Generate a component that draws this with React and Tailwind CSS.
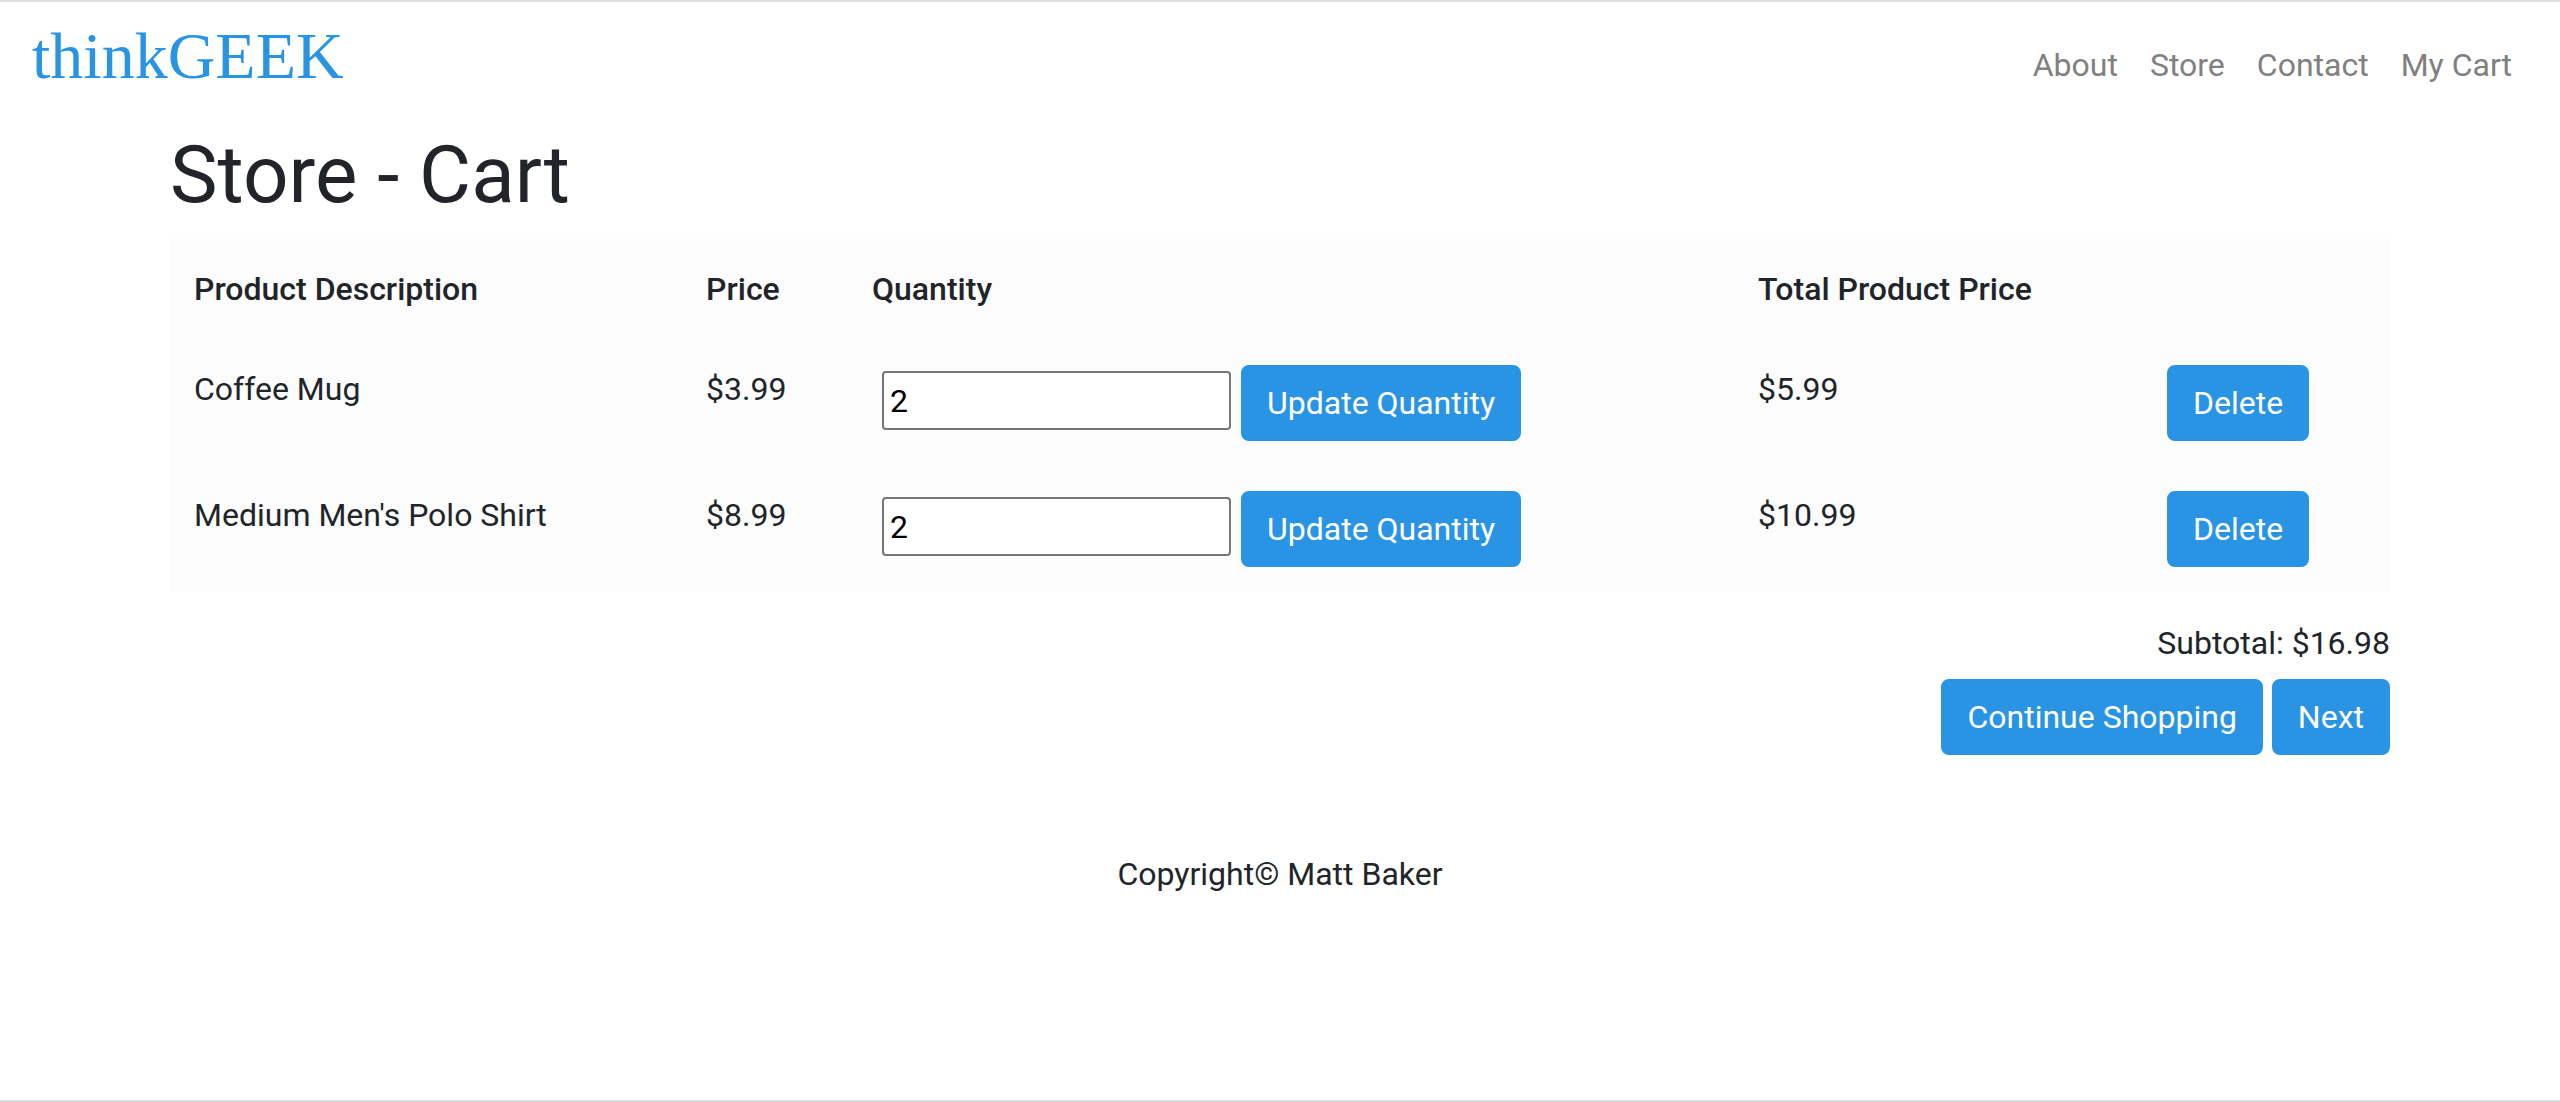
import React from 'react';

const items = [
  { name: 'Coffee Mug', price: '$3.99', qty: 2, total: '$5.99' },
  { name: "Medium Men's Polo Shirt", price: '$8.99', qty: 2, total: '$10.99' },
];

const btn =
  'bg-[#2894e3] text-white text-[32px] leading-[48px] px-[24px] py-[12px] border-2 border-[#2894e3] rounded-[8px] whitespace-nowrap';

const cols = 'grid grid-cols-[512px_166px_886px_409px_247px]';

const Navbar = () => (
  <nav className="h-[125px] flex justify-between px-[32px]">
    <a className="pt-[21px] font-['Liberation_Serif',serif] text-[66px] leading-[66px] text-[#2894e3]">
      thinkGEEK
    </a>
    <ul className="flex pt-[39px]">
      {['About', 'Store', 'Contact', 'My Cart'].map((l) => (
        <li key={l}>
          <a className="block px-[16px] text-[32px] leading-[48px] text-[#808080]">{l}</a>
        </li>
      ))}
    </ul>
  </nav>
);

const CartRow = ({ item }) => (
  <div className={`${cols} border-t-2 border-transparent pt-[24px] pb-[24px]`}>
    <div className="px-[24px]">{item.name}</div>
    <div className="px-[24px]">{item.price}</div>
    <div className="px-[24px] flex items-start gap-[10px]">
      <input
        defaultValue={item.qty}
        className="ml-[10px] mt-[6px] w-[349px] h-[59px] border-2 border-[#767676] rounded-[4px] px-[6px] text-[32px] text-black bg-white"
      />
      <button className={btn}>Update Quantity</button>
    </div>
    <div className="px-[24px]">{item.total}</div>
    <div className="px-[24px]">
      <button className={btn}>Delete</button>
    </div>
  </div>
);

export default function App() {
  return (
    <div className="h-screen border-y-2 border-[#dcdce0] bg-white font-['Roboto',sans-serif] text-[32px] leading-[48px] text-[#212529]">
      <Navbar />
      <main className="w-[2220px] mx-auto">
        <h1 className="text-[80px] leading-[96px] font-normal mb-[16px]">Store - Cart</h1>

        <div className="bg-[#fcfcfc]">
          <div className={`${cols} border-y-2 border-transparent py-[24px] font-medium`}>
            <div className="px-[24px]">Product Description</div>
            <div className="px-[24px]">Price</div>
            <div className="px-[24px]">Quantity</div>
            <div className="px-[24px]">Total Product Price</div>
            <div className="px-[24px]"></div>
          </div>
          {items.map((item) => (
            <CartRow key={item.name} item={item} />
          ))}
        </div>

        <div className="mt-[28px] text-right">Subtotal: $16.98</div>
        <div className="mt-[12px] flex justify-end gap-[9px]">
          <button className={btn}>Continue Shopping</button>
          <button className={btn}>Next</button>
        </div>
      </main>

      <footer className="mt-[95px] text-center">Copyright© Matt Baker</footer>
    </div>
  );
}
